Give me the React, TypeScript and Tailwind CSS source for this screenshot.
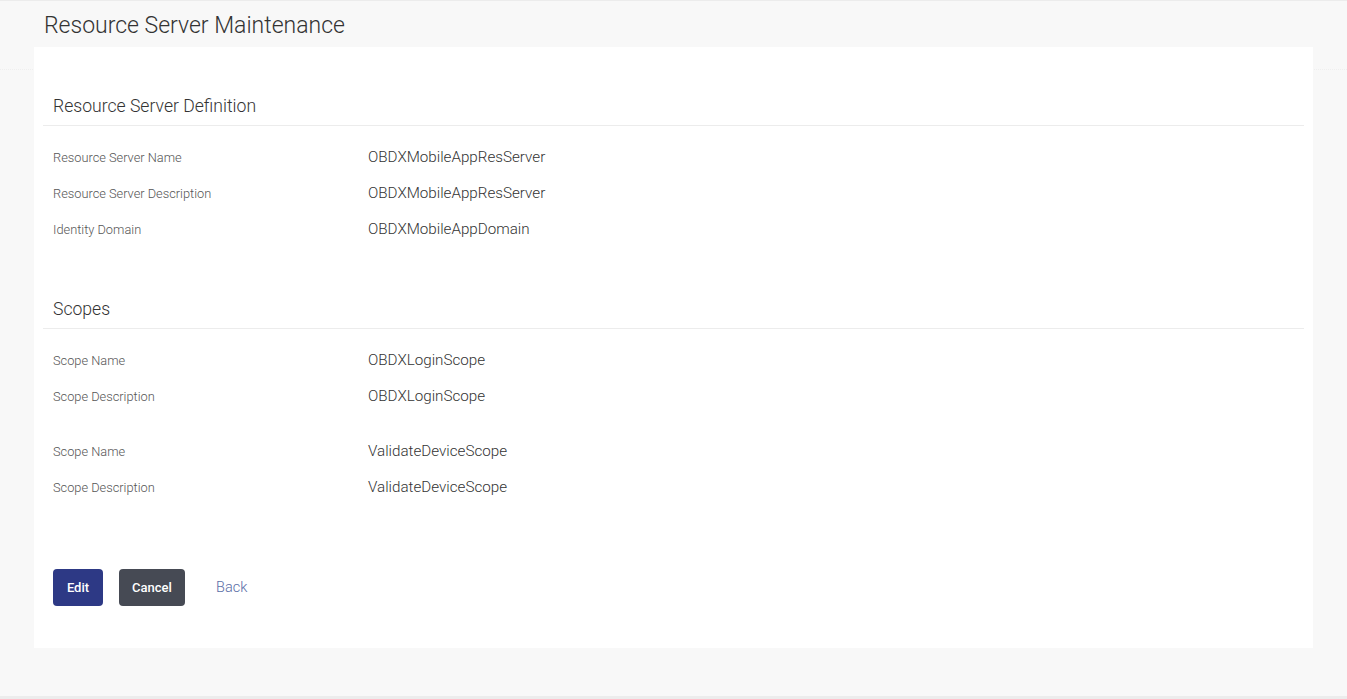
import React from "react";

type Row = { label: string; value: string };

const serverRows: Row[] = [
  { label: "Resource Server Name", value: "OBDXMobileAppResServer" },
  { label: "Resource Server Description", value: "OBDXMobileAppResServer" },
  { label: "Identity Domain", value: "OBDXMobileAppDomain" },
];

const scopes: Row[][] = [
  [
    { label: "Scope Name", value: "OBDXLoginScope" },
    { label: "Scope Description", value: "OBDXLoginScope" },
  ],
  [
    { label: "Scope Name", value: "ValidateDeviceScope" },
    { label: "Scope Description", value: "ValidateDeviceScope" },
  ],
];

function InfoRow({ label, value }: Row) {
  return (
    <div className="flex items-center h-[36px] pl-[10px] pt-[1px]">
      <div className="w-[315px] text-[12.8px] font-light text-[#555]">{label}</div>
      <div className="text-[15.2px] font-light text-[#333]">{value}</div>
    </div>
  );
}

function SectionTitle({ children }: { children: React.ReactNode }) {
  return (
    <div className="border-b border-[#ececec] pb-[7px] pl-[10px]">
      <h2 className="text-[17.6px] leading-[24px] font-light text-[#333]">{children}</h2>
    </div>
  );
}

export default function App() {
  return (
    <div
      className="h-[699px] bg-[#f8f8f8] border-t border-[#ececec] flex flex-col overflow-hidden"
      style={{ fontFamily: "Roboto, 'Liberation Sans', sans-serif" }}
    >
      {/* page header */}
      <div className="h-[69px] pl-[44px] pt-[11px] border-b border-dotted border-[#efefef]">
        <h1 className="text-[23px] leading-[28px] font-light text-[#333]">Resource Server Maintenance</h1>
      </div>

      {/* card */}
      <div className="mx-[34px] mt-[-23px] h-[601px] bg-white px-[9px] pt-[47px]">
        <SectionTitle>Resource Server Definition</SectionTitle>
        <div className="mt-[13px]">
          {serverRows.map((r) => (
            <InfoRow key={r.label} {...r} />
          ))}
        </div>

        <div className="mt-[50px]">
          <SectionTitle>Scopes</SectionTitle>
        </div>
        <div className="mt-[13px] flex flex-col gap-[19px]">
          {scopes.map((group, i) => (
            <div key={i}>
              {group.map((r) => (
                <InfoRow key={r.label} {...r} />
              ))}
            </div>
          ))}
        </div>

        <div className="mt-[64px] pl-[10px] flex items-center gap-[16px]">
          <button className="h-[37px] w-[50px] rounded-[4px] bg-[#2d3985] text-white text-[13px] font-medium">
            Edit
          </button>
          <button className="h-[37px] w-[66px] rounded-[4px] bg-[#464a54] text-white text-[13px] font-medium">
            Cancel
          </button>
          <button className="h-[37px] px-[15px] text-[#5a6ea6] text-[14.5px] font-light">Back</button>
        </div>
      </div>

      <div className="flex-1" />
      <div className="h-[3px] bg-[#ececec]" />
    </div>
  );
}
